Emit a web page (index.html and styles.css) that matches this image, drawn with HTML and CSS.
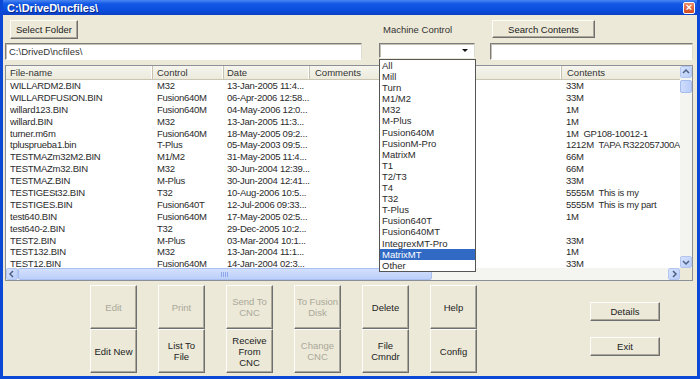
FILE: index.html
```html
<!DOCTYPE html>
<html lang="en">
<head>
  <meta charset="UTF-8" />
  <title>C:\DriveD\ncfiles\</title>
  <link rel="stylesheet" href="styles.css">
</head>
<body>

  <div class="window">
    <div class="title-bar">
      <span class="title-text">C:\DriveD\ncfiles\</span>
      <span class="close-box">&times;</span>
    </div>

    <div class="content">
      <!-- folder / machine filter / search -->
      <div class="top-grid">
        <button class="btn btn-folder">Select Folder</button>
        <span class="machine-label">Machine Control</span>
        <button class="btn btn-search">Search Contents</button>

        <div class="field field-path">C:\DriveD\ncfiles\</div>
        <div class="combo-wrap">
          <div class="combo"><span class="combo-arrow"></span></div>
          <ul class="dropdown" id="dropdown"></ul>
        </div>
        <div class="field field-search"></div>
      </div>

      <!-- file list -->
      <div class="list">
        <div class="list-body">
          <div class="row list-header">
            <span class="cell c-name">File-name</span>
            <span class="cell c-control">Control</span>
            <span class="cell c-date">Date</span>
            <span class="cell c-comments">Comments</span>
            <span class="cell c-contents">Contents</span>
          </div>
          <div id="rows"></div>
        </div>

        <div class="vscroll">
          <span class="sb-btn">
            <svg width="10" height="10" viewBox="0 0 10 10"><polyline points="2,6 5,3 8,6" /></svg>
          </span>
          <span class="sb-thumb-v"></span>
          <span class="sb-track"></span>
          <span class="sb-btn">
            <svg width="10" height="10" viewBox="0 0 10 10"><polyline points="2,4 5,7 8,4" /></svg>
          </span>
        </div>

        <div class="hscroll">
          <span class="sb-btn">
            <svg width="10" height="10" viewBox="0 0 10 10"><polyline points="6,2 3,5 6,8" /></svg>
          </span>
          <span class="sb-thumb-h"><span class="grip"></span></span>
          <span class="sb-track"></span>
          <span class="sb-btn">
            <svg width="10" height="10" viewBox="0 0 10 10"><polyline points="4,2 7,5 4,8" /></svg>
          </span>
        </div>

        <div class="corner"></div>
      </div>

      <!-- actions -->
      <div class="bottom">
        <div class="btn-grid">
          <button class="btn off">Edit</button>
          <button class="btn">Edit New</button>
          <button class="btn off">Print</button>
          <button class="btn">List To<br>File</button>
          <button class="btn off">Send To<br>CNC</button>
          <button class="btn">Receive<br>From<br>CNC</button>
          <button class="btn off">To Fusion<br>Disk</button>
          <button class="btn off">Change<br>CNC</button>
          <button class="btn">Delete</button>
          <button class="btn">File<br>Cmndr</button>
          <button class="btn">Help</button>
          <button class="btn">Config</button>
        </div>
        <div class="side-btns">
          <button class="btn btn-side">Details</button>
          <button class="btn btn-side">Exit</button>
        </div>
      </div>
    </div>
  </div>

  <script>
    const files = [
      ["WILLARDM2.BIN", "M32", "13-Jan-2005 11:4...", "33M"],
      ["WILLARDFUSION.BIN", "Fusion640M", "06-Apr-2006 12:58...", "33M"],
      ["willard123.BIN", "Fusion640M", "04-May-2006 12:0...", "1M"],
      ["willard.BIN", "M32", "13-Jan-2005 11:3...", "1M"],
      ["turner.m6m", "Fusion640M", "18-May-2005 09:2...", "1M  GP108-10012-1"],
      ["tplusprueba1.bin", "T-Plus", "05-May-2003 09:5...", "1212M  TAPA R322057J00A"],
      ["TESTMAZm32M2.BIN", "M1/M2", "31-May-2005 11:4...", "66M"],
      ["TESTMAZm32.BIN", "M32", "30-Jun-2004 12:39...", "66M"],
      ["TESTMAZ.BIN", "M-Plus", "30-Jun-2004 12:41...", "33M"],
      ["TESTIGESt32.BIN", "T32", "10-Aug-2006 10:5...", "5555M  This is my"],
      ["TESTIGES.BIN", "Fusion640T", "12-Jul-2006 09:33...", "5555M  This is my part"],
      ["test640.BIN", "Fusion640M", "17-May-2005 02:5...", "1M"],
      ["test640-2.BIN", "T32", "29-Dec-2005 10:2...", ""],
      ["TEST2.BIN", "M-Plus", "03-Mar-2004 10:1...", "33M"],
      ["TEST132.BIN", "M32", "13-Jan-2004 11:1...", "1M"],
      ["TEST12.BIN", "Fusion640M", "14-Jan-2004 02:3...", "33M"]
    ];

    const machines = ["All", "Mill", "Turn", "M1/M2", "M32", "M-Plus", "Fusion640M", "FusionM-Pro",
      "MatrixM", "T1", "T2/T3", "T4", "T32", "T-Plus", "Fusion640T", "Fusion640MT",
      "IntegrexMT-Pro", "MatrixMT", "Other"];

    const rows = document.getElementById('rows');
    files.forEach(f => {
      const row = document.createElement('div');
      row.className = 'row';
      row.innerHTML =
        `<span class="cell c-name">${f[0]}</span>` +
        `<span class="cell c-control">${f[1]}</span>` +
        `<span class="cell c-date">${f[2]}</span>` +
        `<span class="cell c-comments"></span>` +
        `<span class="cell c-contents">${f[3]}</span>`;
      rows.appendChild(row);
    });

    const dropdown = document.getElementById('dropdown');
    machines.forEach(m => {
      const li = document.createElement('li');
      li.textContent = m;
      if (m === 'MatrixMT') li.classList.add('selected');
      dropdown.appendChild(li);
    });
  </script>
</body>
</html>
```

FILE: styles.css
```css
* {
  box-sizing: border-box;
}

body {
  margin: 0;
  font-family: "Liberation Sans", Arial, sans-serif;
  font-size: 9.5px;
  color: #222;
  background: #ece9d8;
}

.window {
  width: 700px;
  height: 379px;
  display: flex;
  flex-direction: column;
  background: #ece9d8;
  border: 3px solid #0b48d6;
  border-top: none;
  overflow: hidden;
}

.title-bar {
  height: 15px;
  display: flex;
  align-items: center;
  justify-content: space-between;
  padding: 0 2px 0 4px;
  background: linear-gradient(#4a86f2 0%, #1259e6 25%, #0b4cdc 70%, #0a40c4 100%);
}

.title-text {
  color: #fff;
  font-weight: bold;
  font-size: 11px;
  text-shadow: 1px 1px 0 #0a2a8a;
}

.close-box {
  width: 12px;
  height: 12px;
  border: 1px solid #fff;
  border-radius: 2px;
  background: linear-gradient(#ef8a66, #cf4a22);
  color: #fff;
  font-size: 11px;
  line-height: 9px;
  text-align: center;
  font-weight: bold;
}

.content {
  flex: 1;
  padding: 5px 4px 0 2px;
}

/* buttons */
.btn {
  font-family: inherit;
  font-size: 9.5px;
  line-height: 11px;
  color: #222;
  background: #ece9d8;
  border: 1px solid;
  border-color: #fcfcf8 #6f6f6f #6f6f6f #fcfcf8;
  box-shadow: inset -1px -1px 0 #aca899;
  padding: 0;
  text-align: center;
}

.btn.off {
  color: #aba898;
}

/* top area */
.top-grid {
  display: grid;
  grid-template-columns: 357px 113px 218px;
  grid-template-rows: 19px 17px;
  row-gap: 4px;
}

.btn-folder {
  margin-left: 5px;
  width: 68px;
}

.machine-label {
  margin-left: 21px;
  align-self: center;
  color: #333;
}

.btn-search {
  margin-left: 17px;
  width: 103px;
  height: 18px;
}

.field {
  background: #fff;
  border: 1px solid;
  border-color: #7d7d7d #dedbcf #fff #7d7d7d;
  box-shadow: inset 1px 1px 0 #c4c1b4;
  padding-left: 3px;
  line-height: 15px;
  color: #333;
}

.field-search {
  margin-left: 15px;
}

.combo-wrap {
  position: relative;
  margin-left: 17px;
  width: 96px;
}

.combo {
  height: 15px;
  background: #fff;
  border: 1px solid;
  border-color: #7d7d7d #dedbcf #fff #7d7d7d;
  box-shadow: inset 1px 1px 0 #c4c1b4;
  position: relative;
}

.combo-arrow {
  position: absolute;
  right: 6px;
  top: 5px;
  border-left: 3px solid transparent;
  border-right: 3px solid transparent;
  border-top: 3px solid #111;
}

.dropdown {
  position: absolute;
  top: 16px;
  left: 0;
  width: 97px;
  margin: 0;
  padding: 0;
  list-style: none;
  background: #fff;
  border: 1px solid #555;
  z-index: 5;
}

.dropdown li {
  height: 11.1px;
  line-height: 11.1px;
  padding-left: 2px;
  color: #2a2a2a;
}

.dropdown li.selected {
  background: #316ac5;
  color: #fff;
}

/* file list */
.list {
  margin-top: 5px;
  width: 688px;
  height: 216px;
  border: 1px solid #8a8f98;
  background: #fff;
  display: grid;
  grid-template-columns: 674px 12px;
  grid-template-rows: 202px 12px;
}

.list-body {
  overflow: hidden;
}

.row {
  display: flex;
  height: 11.9px;
  line-height: 11.9px;
  white-space: nowrap;
}

.cell {
  flex: none;
  overflow: hidden;
  white-space: pre;
  padding-left: 4px;
  letter-spacing: -0.25px;
  color: #2b2b2b;
}

.c-name { width: 147px; }
.c-control { width: 71px; }
.c-date { width: 86px; padding-left: 3px; }
.c-comments { width: 252px; }
.c-contents { width: 200px; }

.list-header {
  height: 14px;
  line-height: 13px;
}

.list-header .cell {
  letter-spacing: 0;
  background: linear-gradient(#f6f5ee, #ebeadb);
  border-right: 1px solid #c5c2b0;
  border-bottom: 1px solid #c9c6b4;
  box-shadow: inset -1px 0 0 #fff;
  color: #333;
}

.list-header .c-comments { padding-left: 5px; }
.list-header .c-contents { padding-left: 5px; }

/* scrollbars */
.vscroll,
.hscroll {
  display: flex;
  background: #f4f4f1;
}

.vscroll {
  flex-direction: column;
}

.sb-btn {
  flex: none;
  width: 12px;
  height: 12px;
  background: linear-gradient(135deg, #d6e2fd, #b9cdf8);
  border: 1px solid #b3c6f1;
  border-radius: 2px;
  display: flex;
  align-items: center;
  justify-content: center;
}

.sb-btn svg polyline {
  fill: none;
  stroke: #4d6185;
  stroke-width: 1.5;
}

.sb-thumb-v {
  flex: none;
  margin-top: 2px;
  height: 13px;
  background: linear-gradient(90deg, #cfdcfd, #b9cdf8);
  border: 1px solid #a4bbef;
  border-radius: 2px;
}

.sb-track {
  flex: 1;
}

.sb-thumb-h {
  flex: none;
  width: 414px;
  background: linear-gradient(#d3e0fd, #bccff8);
  border: 1px solid #a9bff1;
  border-radius: 2px;
  display: flex;
  align-items: center;
  justify-content: center;
}

.grip {
  width: 8px;
  height: 5px;
  background: repeating-linear-gradient(90deg, #8ea8e8 0 1px, transparent 1px 2px);
}

.corner {
  background: #ece9d8;
}

/* bottom actions */
.bottom {
  display: flex;
  justify-content: space-between;
  padding: 4px 33px 0 85px;
}

.btn-grid {
  display: grid;
  grid-template-columns: repeat(6, 47px);
  grid-template-rows: 44px 44px;
  grid-auto-flow: column;
  column-gap: 21px;
}

.side-btns {
  display: flex;
  flex-direction: column;
  gap: 16px;
  padding-top: 17px;
}

.btn-side {
  width: 70px;
  height: 19px;
}
```
